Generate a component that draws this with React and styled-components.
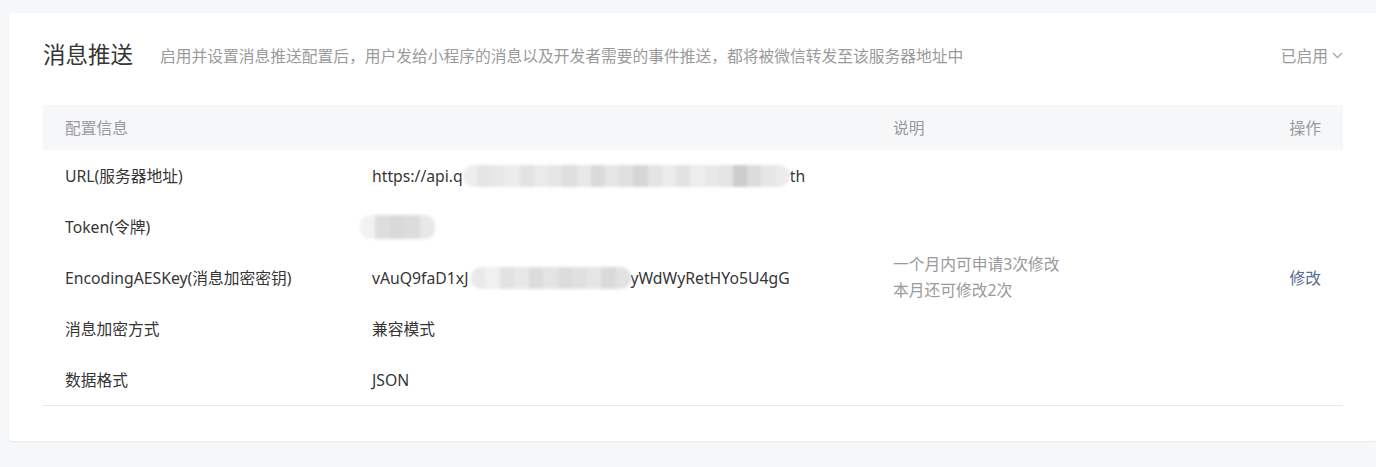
import React from 'react';
import styled, { createGlobalStyle } from 'styled-components';

const GlobalStyle = createGlobalStyle`
  html, body {
    margin: 0;
    padding: 0;
    background: #f6f7f9;
    overflow: hidden;
  }
  body {
    font-family: "Noto Sans", "Noto Sans CJK SC", sans-serif;
    color: #353535;
  }
`;

const mosaic = {
  url: ['#eee', '#e4e4e4', '#e8e8e8', '#ececec', '#e2e2e2', '#eaeaea', '#e6e6e6', '#dedede', '#e8e8e8', '#dadada', '#e6e6e6', '#e0e0e0', '#d6d6d6', '#e4e4e4', '#ececec', '#e2e2e2', '#ededed', '#e9e9e9', '#e4e4e4', '#ccc', '#dcdcdc', '#e6e6e6', '#ececec'],
  token: ['#f2f2f2', '#dedede', '#d9d9d9', '#dcdcdc', '#e8e8e8'],
  aes: ['#e9e9e9', '#f0f0f0', '#e2e2e2', '#e8e8e8', '#dcdcdc', '#e4e4e4', '#dcdcdc', '#e0e0e0', '#e6e6e6', '#dadada', '#e2e2e2'],
};

export default function App() {
  return (
    <Page>
      <GlobalStyle />
      <Card>
        <TitleBar>
          <Title>消息推送</Title>
          <Desc>启用并设置消息推送配置后，用户发给小程序的消息以及开发者需要的事件推送，都将被微信转发至该服务器地址中</Desc>
          <Status>
            已启用
            <Chevron viewBox="0 0 11 7" width="11" height="7">
              <path d="M1 1l4.5 4.5L10 1" fill="none" stroke="#a8a8a8" strokeWidth="1.4" />
            </Chevron>
          </Status>
        </TitleBar>

        <Table>
          <HeadCell>配置信息</HeadCell>
          <HeadCell />
          <HeadCell>说明</HeadCell>
          <HeadCell $right>操作</HeadCell>

          <Cell>URL(服务器地址)</Cell>
          <Cell>
            https://api.q
            <Blur cells={mosaic.url} $w={327} $h={22} />
            th
          </Cell>
          <Cell />
          <Cell />

          <Cell>Token(令牌)</Cell>
          <Cell>
            <Blur cells={mosaic.token} $w={75} $h={24} $shift={-12} />
          </Cell>
          <Cell />
          <Cell />

          <Cell>EncodingAESKey(消息加密密钥)</Cell>
          <Cell>
            vAuQ9faD1xJ
            <Blur cells={mosaic.aes} $w={160} $h={22} $shift={2} />
            yWdWyRetHYo5U4gG
          </Cell>
          <Cell $muted $lines>
            一个月内可申请3次修改
            <br />
            本月还可修改2次
          </Cell>
          <Cell $right>
            <Link href="#">修改</Link>
          </Cell>

          <Cell>消息加密方式</Cell>
          <Cell>兼容模式</Cell>
          <Cell />
          <Cell />

          <Cell>数据格式</Cell>
          <Cell>JSON</Cell>
          <Cell />
          <Cell />
        </Table>
      </Card>
    </Page>
  );
}

function Blur({ cells, $w, $h, $shift }) {
  return (
    <BlurBox $w={$w} $h={$h} $shift={$shift}>
      {cells.map((c, i) => (
        <BlurCell key={i} style={{ background: c }} />
      ))}
    </BlurBox>
  );
}

const Page = styled.div`
  padding: 13px 0 0 9px;
  height: 467px;
  box-sizing: border-box;
`;

const Card = styled.div`
  width: 1368px;
  box-sizing: border-box;
  padding: 29px 34px 35px;
  background: #fff;
  border-radius: 4px;
  box-shadow: 0 1px 2px rgba(0, 0, 0, 0.06);
`;

const TitleBar = styled.div`
  display: flex;
  align-items: center;
  height: 26px;
  margin-bottom: 37px;
`;

const Title = styled.h2`
  margin: 0;
  font-size: 22.5px;
  font-weight: 400;
  color: #353535;
  line-height: 26px;
`;

const Desc = styled.span`
  margin-left: 27px;
  font-size: 15.75px;
  color: #9a9a9a;
  flex: 1;
  padding-top: 1px;
`;

const Status = styled.span`
  display: flex;
  align-items: center;
  gap: 4px;
  font-size: 15.75px;
  color: #9a9a9a;
`;

const Chevron = styled.svg`
  display: block;
  margin-top: 1px;
`;

const Table = styled.div`
  display: grid;
  grid-template-columns: 307px 521px 1fr auto;
  grid-auto-rows: 51px;
  grid-template-rows: 45px;
  border-bottom: 1px solid #e7e7eb;
  font-size: 15.75px;
`;

const HeadCell = styled.div`
  display: flex;
  align-items: center;
  justify-content: ${p => (p.$right ? 'flex-end' : 'flex-start')};
  padding: 0 22px;
  background: #f6f7f9;
  color: #9a9a9a;
`;

const Cell = styled.div`
  display: ${p => (p.$lines ? 'block' : 'flex')};
  align-items: center;
  justify-content: ${p => (p.$right ? 'flex-end' : 'flex-start')};
  align-self: ${p => (p.$lines ? 'center' : 'stretch')};
  padding: 0 22px;
  color: ${p => (p.$muted ? '#9a9a9a' : '#353535')};
  line-height: ${p => (p.$lines ? '25.5px' : 'normal')};
  white-space: nowrap;
`;

const Link = styled.a`
  color: #576b95;
  text-decoration: none;
`;

const BlurBox = styled.span`
  display: inline-flex;
  flex-shrink: 0;
  width: ${p => p.$w}px;
  height: ${p => p.$h}px;
  margin-left: ${p => p.$shift || 0}px;
  filter: blur(1.5px);
  border-radius: 10px;
  overflow: hidden;
`;

const BlurCell = styled.span`
  flex: 1;
`;
